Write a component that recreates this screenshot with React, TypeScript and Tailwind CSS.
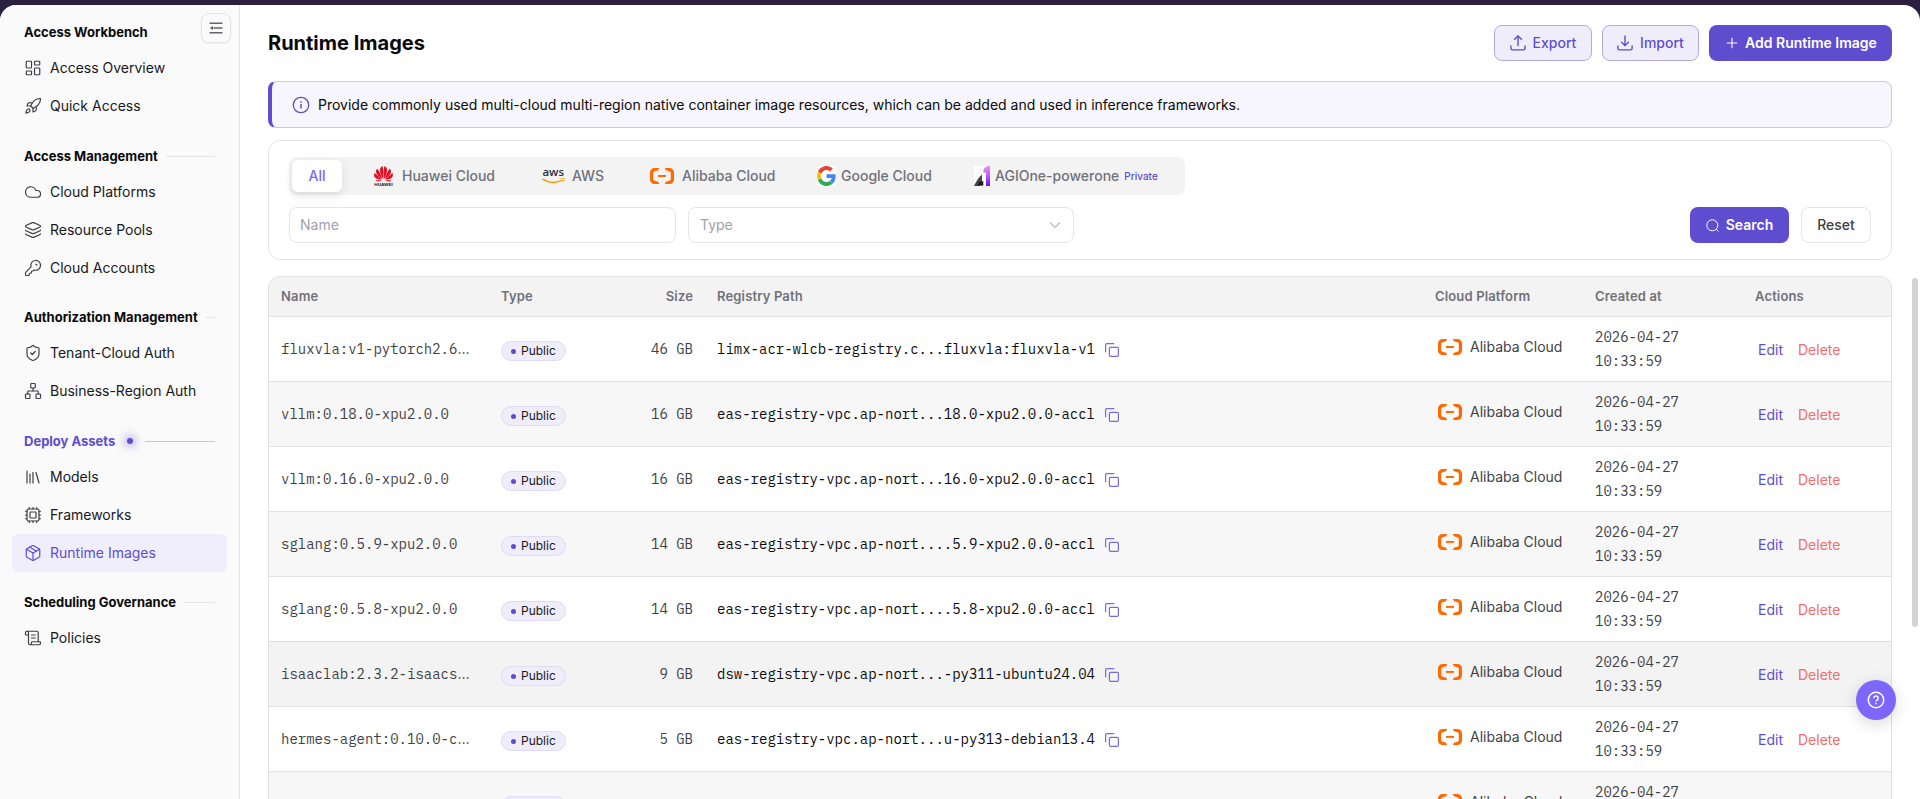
import type { ReactNode } from "react";
import {
  LayoutDashboard,
  Rocket,
  Cloud,
  Layers,
  KeyRound,
  ShieldCheck,
  Network,
  Library,
  Cpu,
  Package,
  ScrollText,
  Plus,
  type LucideIcon,
} from "lucide-react";

type MenuItem = { label: string; icon: LucideIcon; active?: boolean };
type MenuGroup = { title: string; items: MenuItem[]; active?: boolean; noLine?: boolean };

const menu: MenuGroup[] = [
  {
    title: "Access Workbench",
    noLine: true,
    items: [
      { label: "Access Overview", icon: LayoutDashboard },
      { label: "Quick Access", icon: Rocket },
    ],
  },
  {
    title: "Access Management",
    items: [
      { label: "Cloud Platforms", icon: Cloud },
      { label: "Resource Pools", icon: Layers },
      { label: "Cloud Accounts", icon: KeyRound },
    ],
  },
  {
    title: "Authorization Management",
    items: [
      { label: "Tenant-Cloud Auth", icon: ShieldCheck },
      { label: "Business-Region Auth", icon: Network },
    ],
  },
  {
    title: "Deploy Assets",
    active: true,
    items: [
      { label: "Models", icon: Library },
      { label: "Frameworks", icon: Cpu },
      { label: "Runtime Images", icon: Package, active: true },
    ],
  },
  {
    title: "Scheduling Governance",
    items: [{ label: "Policies", icon: ScrollText }],
  },
];

const rows = [
  { name: "fluxvla:v1-pytorch2.6", cut: true, size: "46 GB", path: "limx-acr-wlcb-registry.c...fluxvla:fluxvla-v1", bg: "bg-white" },
  { name: "vllm:0.18.0-xpu2.0.0", size: "16 GB", path: "eas-registry-vpc.ap-nort...18.0-xpu2.0.0-accl", bg: "bg-[#f7f7f7]" },
  { name: "vllm:0.16.0-xpu2.0.0", size: "16 GB", path: "eas-registry-vpc.ap-nort...16.0-xpu2.0.0-accl", bg: "bg-white" },
  { name: "sglang:0.5.9-xpu2.0.0", size: "14 GB", path: "eas-registry-vpc.ap-nort....5.9-xpu2.0.0-accl", bg: "bg-[#f7f7f7]" },
  { name: "sglang:0.5.8-xpu2.0.0", size: "14 GB", path: "eas-registry-vpc.ap-nort....5.8-xpu2.0.0-accl", bg: "bg-white" },
  { name: "isaaclab:2.3.2-isaacs", cut: true, size: "9 GB", path: "dsw-registry-vpc.ap-nort...-py311-ubuntu24.04", bg: "bg-[#f3f3f3]" },
  { name: "hermes-agent:0.10.0-c", cut: true, size: "5 GB", path: "eas-registry-vpc.ap-nort...u-py313-debian13.4", bg: "bg-white" },
];

const columns = "grid grid-cols-[220px_120px_96px_718px_160px_160px_148px]";
const mono = "font-['IBM_Plex_Mono','Liberation_Mono',monospace]";

const AlibabaLogo = () => (
  <svg width="24" height="16" viewBox="0 0 24 16" fill="#ff6a00" className="shrink-0">
    <path d="M9.2 0H4.6A4.6 4.6 0 0 0 0 4.6v6.8A4.6 4.6 0 0 0 4.6 16h4.6l-1.1-2.2-3.4-1A1.9 1.9 0 0 1 3.2 11V5a1.9 1.9 0 0 1 1.5-1.8l3.4-1z" />
    <path d="M14.8 0h4.6A4.6 4.6 0 0 1 24 4.6v6.8a4.6 4.6 0 0 1-4.6 4.6h-4.6l1.1-2.2 3.4-1a1.9 1.9 0 0 0 1.5-1.8V5a1.9 1.9 0 0 0-1.5-1.8l-3.4-1z" />
    <path d="M8 7h8v1.9H8z" />
  </svg>
);

const HuaweiLogo = () => (
  <svg width="19" height="20" viewBox="0 0 19 20" className="shrink-0 overflow-visible">
    <g fill="#e60f22">
      <path d="M9.1 13C7.2 9.6 5.6 6.3 6 3.4 6.2 1.7 7.2.6 8.6.3 9.5 3.8 9.5 9 9.1 13z" />
      <path d="M9.9 13c1.9-3.4 3.5-6.7 3.1-9.6C12.8 1.7 11.8.6 10.4.3 9.5 3.8 9.5 9 9.9 13z" />
      <path d="M8.5 13.2C7.1 9.3 5.3 5.3 3.5 2.7 2.1 3.7 1.7 5 2.1 6.5c.6 2.4 3.7 4.7 6.4 6.7z" />
      <path d="M10.5 13.2c1.4-3.9 3.2-7.9 5-10.5 1.4 1 1.8 2.3 1.4 3.8-.6 2.4-3.7 4.7-6.4 6.7z" />
      <path d="M8 13.6C5.5 11.3 2.7 8.7.5 7.1c-.8 1.900-.3 3.700 1 4.900 1.500 1.200 4.100 1.500 6.500 1.600z" />
      <path d="M11 13.6c2.500-2.300 5.300-4.900 7.500-6.500.8 1.900.3 3.700-1 4.900-1.500 1.200-4.100 1.500-6.500 1.600z" />
      <path d="M7.800 14.200H1.600c.9 1.100 2.500 1.500 3.900 1.100.9-.2 1.600-.6 2.300-1.100z" />
      <path d="M11.200 14.200h6.200c-.9 1.100-2.500 1.500-3.900 1.100-.9-.2-1.600-.6-2.300-1.100z" />
    </g>
    <text x="0.3" y="19.6" textLength="18.4" lengthAdjust="spacingAndGlyphs" className="fill-[#222] font-['Inter',sans-serif] text-[4px] font-bold">
      HUAWEI
    </text>
  </svg>
);

const AwsLogo = () => (
  <svg width="23" height="16" viewBox="0 0 23 16" className="shrink-0 overflow-visible">
    <text x="0.5" y="8.2" textLength="21.5" lengthAdjust="spacingAndGlyphs" className="fill-[#252f3e] font-['Open_Sans',sans-serif] text-[11.5px] font-semibold">
      aws
    </text>
    <path d="M.4 11.2c5.800 3.700 13.400 4 20.200.9" fill="none" stroke="#f90" strokeWidth="1.5" />
    <path d="M18.600 10.700c1.400-.4 3-.5 3.600-.1.300.8-.3 2.400-1.300 3.500" fill="none" stroke="#f90" strokeWidth="1" />
  </svg>
);

const GoogleLogo = () => (
  <svg width="19" height="20" viewBox="0 0 48 48" preserveAspectRatio="none" className="shrink-0 bg-white">
    <path fill="#ea4335" d="M24 9.5c3.54 0 6.71 1.22 9.21 3.6l6.85-6.85C35.9 2.38 30.47 0 24 0 14.62 0 6.51 5.38 2.56 13.22l7.98 6.19C12.43 13.72 17.74 9.5 24 9.5z" />
    <path fill="#4285f4" d="M46.98 24.55c0-1.57-.15-3.09-.38-4.55H24v9.02h12.94c-.58 2.96-2.26 5.48-4.78 7.18l7.73 6c4.51-4.18 7.09-10.36 7.09-17.65z" />
    <path fill="#fbbc05" d="M10.53 28.59c-.48-1.45-.76-2.99-.76-4.59s.27-3.14.76-4.59l-7.98-6.19C.92 16.46 0 20.12 0 24c0 3.88.92 7.54 2.56 10.78l7.97-6.19z" />
    <path fill="#34a853" d="M24 48c6.48 0 11.93-2.13 15.89-5.81l-7.73-6c-2.15 1.45-4.92 2.3-8.16 2.3-6.26 0-11.57-4.22-13.47-9.91l-7.98 6.19C6.51 42.62 14.62 48 24 48z" />
  </svg>
);

const AgiLogo = () => (
  <svg width="16" height="20" viewBox="0 0 16 20" className="shrink-0 bg-white">
    <defs>
      <linearGradient id="agi-bar" x1="0" y1="0" x2="0" y2="1">
        <stop offset="0" stopColor="#f08cf5" />
        <stop offset="0.5" stopColor="#b45cfb" />
        <stop offset="1" stopColor="#6d10f5" />
      </linearGradient>
    </defs>
    <path d="M8 8.5v7L3.5 20H0c1.500-3.500 4.500-8.500 8-11.500z" fill="#444" />
    <path d="M4.5 16.5 9.3 15v4.500L3.500 20z" fill="#1c1c1c" />
    <path d="M16 0v20h-4V6.500H9.500V4.500C9.500 2 12 0 16 0z" fill="url(#agi-bar)" />
  </svg>
);

// arrow over an open tray, pointing up for export and down for import
const TrayIcon = ({ up = false }: { up?: boolean }) => (
  <svg width="16" height="16" viewBox="0 0 16 16" fill="none" stroke="currentColor" strokeWidth="1.4" strokeLinecap="round" strokeLinejoin="round">
    <path d="M.9 11v2.300c0 .9.700 1.600 1.600 1.600h11c.9 0 1.600-.7 1.600-1.600V11" />
    <path d="M8 .9v9.700" />
    <path d={up ? "M4.600 4.200 8 .9l3.400 3.300" : "M4.600 7.300 8 10.600l3.400-3.300"} />
  </svg>
);

const tabs: { label: string; logo: ReactNode; spacing: string; tag?: string }[] = [
  { label: "Huawei Cloud", logo: <HuaweiLogo />, spacing: "ml-8 gap-[9px] w-[122px]" },
  { label: "AWS", logo: <AwsLogo />, spacing: "ml-[46px] gap-[7px] w-[63px]" },
  { label: "Alibaba Cloud", logo: <AlibabaLogo />, spacing: "ml-[45px] gap-2 w-[126px]" },
  { label: "Google Cloud", logo: <GoogleLogo />, spacing: "ml-[41px] gap-[5px] w-[116px]" },
  { label: "AGIOne-powerone", logo: <AgiLogo />, spacing: "ml-[41px] gap-[5px]", tag: "Private" },
];

const Sidebar = () => (
  <aside className="relative w-60 shrink-0 border-r border-[#e4e4e7] bg-[#fafafa] pt-[10.5px]">
    <button className="absolute right-[8px] top-[8px] flex h-[30px] w-[30px] items-center justify-center rounded-lg border border-[#e5e5e8] bg-[#fafafa] text-[#63636b] shadow-xs">
      <svg width="14" height="12" viewBox="0 0 14 12" fill="currentColor">
        <path d="M.5.5h13V2H.5zM4.500 5.200h9v1.600h-9zM.5 10h13v1.500H.5zM.8 6 4 3.900v4.200z" />
      </svg>
    </button>
    {menu.map((group) => (
      <div key={group.title} className="mb-3.5">
        <div className="flex h-[33.5px] items-center pl-6 pr-6 pt-px">
          <span className={`text-[13px] font-bold ${group.active ? "text-[#5f4dcf]" : "text-[#09090b]"}`}>{group.title}</span>
          {group.active && (
            <span className="ml-3 mr-1 h-1.5 w-1.5 rounded-full bg-[#5f4dcf] shadow-[0_0_9px_3px_rgba(95,77,207,0.4)]" />
          )}
          {!group.noLine && <span className={`ml-2 h-px flex-1 ${group.active ? "bg-[#c9c3ec]" : "bg-[#e4e4e7]"}`} />}
        </div>
        {group.items.map((item) => (
          <div
            key={item.label}
            className={`ml-3 mr-3 flex h-[38px] items-center gap-2 rounded-md pl-3 text-sm ${
              item.active ? "bg-[#f0edfd] text-[#5f4dcf]" : "text-[#18181b]"
            }`}
          >
            <item.icon size={18} strokeWidth={1.6} className={item.active ? "" : "text-[#3f3f46]"} />
            <span>{item.label}</span>
          </div>
        ))}
      </div>
    ))}
  </aside>
);

const Filters = () => (
  <section className="mt-3 h-[120px] rounded-xl border border-[#e4e4e7] px-5 pt-4">
    <div className="flex h-[38px] w-[896px] items-center rounded-lg bg-[#f3f3f3] pl-[3px] text-sm font-medium text-[#71717a]">
      <div className="flex h-8 w-[50px] items-center justify-center rounded-md bg-white text-[#7c66fb] shadow-[0_4px_10px_rgba(0,0,0,0.1)]">All</div>
      {tabs.map((tab) => (
        <div key={tab.label} className={`flex items-center whitespace-nowrap ${tab.spacing}`}>
          {tab.logo}
          <span>{tab.label}</span>
          {tab.tag && <span className="text-[10px] text-[#5f4dcf]">{tab.tag}</span>}
        </div>
      ))}
    </div>
    <div className="mt-3 flex items-center text-sm">
      <div className="flex h-9 w-[387px] items-center rounded-lg border border-[#e4e4e7] px-2.5 text-[#a1a1aa]">Name</div>
      <div className="ml-3 flex h-9 w-[386px] items-center justify-between rounded-lg border border-[#e4e4e7] px-[11px] text-[#a1a1aa]">
        Type
        <svg width="14" height="14" viewBox="0 0 14 14" fill="none" stroke="#b8b8be" strokeWidth="1.2">
          <path d="m2 4.500 5 5 5-5" />
        </svg>
      </div>
      <button className="ml-auto flex h-9 w-[99px] items-center justify-center gap-[7px] rounded-lg bg-[#5f4dcf] font-semibold text-white">
        <svg width="13" height="13" viewBox="0 0 13 13" fill="none" stroke="currentColor" strokeWidth="1">
          <circle cx="6.3" cy="6.3" r="5.5" />
          <path d="m10.300 10.300 2.200 2.200" />
        </svg>
        Search
      </button>
      <button className="ml-3 h-9 w-[70px] rounded-lg border border-[#e4e4e7] font-medium text-[#3f3f46]">Reset</button>
    </div>
  </section>
);

const PublicTag = () => (
  <span className="flex h-5 w-[65px] items-center gap-[5px] rounded-full border border-[#dfdaf6] bg-[#efedfa] pl-[9px] text-xs text-[#18181b]">
    <i className="h-[5px] w-[5px] rounded-full bg-[#5f4dcf]" />
    Public
  </span>
);

const CopyIcon = () => (
  <svg width="14" height="14" viewBox="0 0 14 14" fill="none" stroke="#7a6bd8" strokeWidth="1.2" className="mt-0.5">
    <rect x="4.4" y="4.4" width="9" height="9" rx="1.2" />
    <path d="M.6 9.300V1.900C.6 1.200 1.200.6 1.900.6h7.400" />
  </svg>
);

const ImagesTable = () => (
  <section className="mt-4 overflow-hidden rounded-t-xl border border-b-0 border-[#e0e0e3]">
    <div className={`${columns} h-[39px] items-center bg-[#f3f3f3] text-[13px] font-semibold tracking-[0.15px] text-[#71717a]`}>
      <span className="px-3">Name</span>
      <span className="px-3">Type</span>
      <span className="px-3 text-right">Size</span>
      <span className="px-3">Registry Path</span>
      <span className="px-3">Cloud Platform</span>
      <span className="px-3">Created at</span>
      <span className="px-3">Actions</span>
    </div>
    {rows.map((row) => (
      <div key={row.name} className={`${columns} h-[65px] items-center border-t border-[#e2e2e4] text-sm text-[#3f3f46] ${row.bg}`}>
        <span className={`px-3 whitespace-nowrap ${mono}`}>
          {row.name}
          {row.cut && <span className="font-['Inter',sans-serif]">…</span>}
        </span>
        <div className="px-3 pt-1">
          <PublicTag />
        </div>
        <span className={`px-3 text-right whitespace-nowrap ${mono}`}>{row.size}</span>
        <div className="flex items-center gap-2.5 px-3 text-[#09090b]">
          <span className={mono}>{row.path}</span>
          <CopyIcon />
        </div>
        <div className="flex items-center gap-2 pl-[15px] pb-1 whitespace-nowrap">
          <AlibabaLogo />
          <span>Alibaba Cloud</span>
        </div>
        <div className={`px-3 leading-6 ${mono}`}>
          2026-04-27
          <br />
          10:33:59
        </div>
        <div className="flex gap-[15px] pl-[15px] pt-0.5">
          <span className="text-[#5f4dcf]">Edit</span>
          <span className="text-[#f56c6c]">Delete</span>
        </div>
      </div>
    ))}
    {/* last row, only its top shows above the fold */}
    <div className={`${columns} h-[65px] border-t border-[#e2e2e4] bg-[#f7f7f7] text-sm text-[#3f3f46]`}>
      <span />
      <div className="px-3 pt-6">
        <PublicTag />
      </div>
      <span />
      <div className="flex items-start pt-[25px] pl-[400px]">
        <CopyIcon />
      </div>
      <div className="flex items-start gap-2 pl-[15px] pt-[22px] whitespace-nowrap">
        <AlibabaLogo />
        <span className="-mt-0.5">Alibaba Cloud</span>
      </div>
      <div className={`px-3 pt-2 leading-6 ${mono}`}>2026-04-27</div>
      <span />
    </div>
  </section>
);

const App = () => {
  return (
    <div className="relative h-[799px] w-full overflow-hidden bg-[#2c2040] pt-[5px] font-['Inter',sans-serif]">
      <div className="flex h-[794px] overflow-hidden rounded-t-2xl bg-white">
        <Sidebar />
        <main className="flex-1 overflow-hidden pl-7 pr-7 pt-5">
          <header className="flex h-9 items-center text-sm">
            <h1 className="text-xl font-bold text-[#09090b]">Runtime Images</h1>
            <button className="ml-auto flex h-9 w-[98px] items-center justify-center gap-[7px] rounded-lg border border-[#b3a9e8] bg-[#efedfa] font-medium text-[#5f4dcf]">
              <TrayIcon up />
              Export
            </button>
            <button className="ml-2.5 flex h-9 w-[97px] items-center justify-center gap-[7px] rounded-lg border border-[#b3a9e8] bg-[#efedfa] font-medium text-[#5f4dcf]">
              <TrayIcon />
              Import
            </button>
            <button className="ml-2.5 flex h-9 w-[183px] items-center justify-center gap-[5px] rounded-lg bg-[#5f4dcf] font-semibold text-white">
              <Plus size={16} strokeWidth={1.6} />
              Add Runtime Image
            </button>
          </header>
          <div className="mt-5 flex h-[47px] items-center gap-2 rounded-lg border border-l-4 border-[#cdc7ef] border-l-[#5f4dcf] bg-[#f7f6fc] pl-5 text-sm text-[#09090b]">
            <svg width="18" height="18" viewBox="0 0 18 18" fill="none" stroke="#5f4dcf" strokeWidth="1.3">
              <circle cx="9" cy="9" r="7.7" />
              <path d="M9 8v4.500M9 5.200v1.500" strokeWidth="1.5" />
            </svg>
            Provide commonly used multi-cloud multi-region native container image resources, which can be added and used in inference frameworks.
          </div>
          <Filters />
          <ImagesTable />
        </main>
      </div>
      {/* page scrollbar */}
      <div className="absolute right-0.5 top-[278px] h-[349px] w-1.5 rounded-full bg-[#d4d4d6]" />
      <button className="absolute right-6 top-[680px] flex h-10 w-10 items-center justify-center rounded-full bg-[#7c66fb] text-white shadow-[0_4px_16px_rgba(0,0,0,0.15)]">
        <svg width="18" height="18" viewBox="0 0 18 18" fill="none" stroke="currentColor" strokeWidth="1.5">
          <circle cx="9" cy="9" r="7.7" />
          <path d="M6.800 7.200a2.200 2.200 0 1 1 3.300 1.900c-.7.400-1.100.7-1.100 1.400M9 11.800v1.500" />
        </svg>
      </button>
    </div>
  );
};

export default App;
